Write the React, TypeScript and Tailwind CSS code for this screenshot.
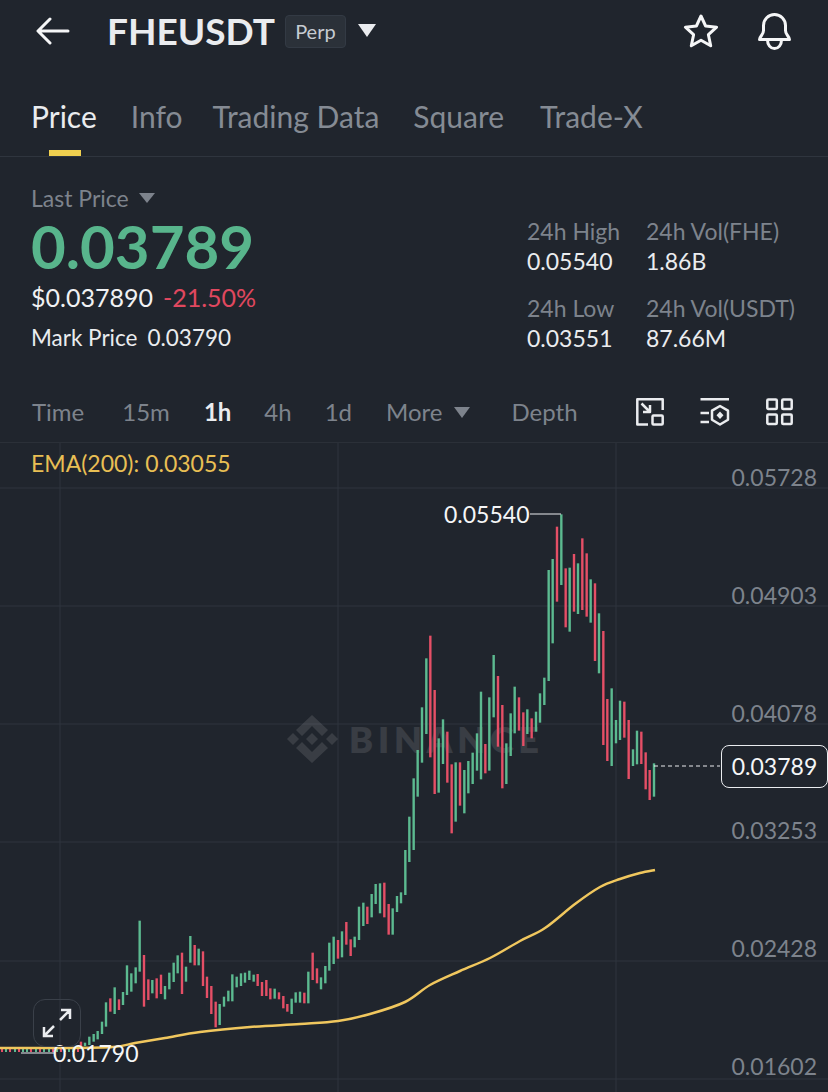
import React from "react";

const G = "#5cba90";
const R = "#e54f66";

// [x, top, bottom, up] measured on 3x crops
const left: [number, number, number, number][] = [
  [243,545,558,0],[255,548,558,1],[268,530,555,1],[281,522,545,1],[293,513,538,1],[306,485,522,1],[318,427,500,1],[331,415,455,0],
  [344,382,462,1],[357,418,450,0],[369,396,435,1],[381,316,405,1],[394,340,395,1],[407,322,370,1],[419,182,335,1],[432,285,440,0],
  [445,358,420,0],[457,360,400,1],[470,355,415,0],[483,344,402,0],[495,378,418,1],[508,338,388,1],[521,308,366,1],[533,286,340,1],
  [546,278,402,0],[558,320,365,1],[571,228,308,1],[584,255,316,0],[596,266,316,1],[609,274,378,0],[621,350,414,0],[634,378,462,0],
  [647,425,502,0],[659,432,495,1],[672,410,440,1],[685,392,424,1],[697,343,424,1],[710,350,382,1],[723,340,378,1],[735,338,368,1],
  [748,332,360,1],[761,344,365,1],[773,342,378,0],[786,366,408,0],[799,360,408,0],[811,385,418,0],[824,386,416,1],[837,397,418,0],
  [850,408,445,0],[862,432,455,0],[875,416,462,1],[887,397,428,1],[900,395,428,1],[913,398,430,0],[925,335,430,1],[938,278,360,0],
  [951,325,370,0],[963,352,388,1],[976,318,370,1],[988,248,332,1],[1001,230,312,1],[1014,240,296,0],[1026,214,292,1],[1039,186,254,0],
  [1052,238,288,0],[1064,230,262,1],[1077,140,240,1],[1090,128,198,1],[1102,140,192,0],[1115,102,172,1],[1127,72,132,1],[1140,70,160,1],
  [1153,68,172,0],[1166,132,224,0],[1178,145,224,1],[1191,108,156,1],[1203,97,130,1],[1216,-30,105,1],
];
const right: [number, number, number, number][] = [
  [28,950,1086,1],[41,835,1050,1],[53,750,890,1],[66,622,788,1],[79,475,702,1],[91,407,772,0],[104,570,882,0],[116,715,878,1],
  [129,658,792,1],[142,695,848,0],[155,793,1000,0],[167,787,965,1],[180,787,917,0],[193,810,940,1],[205,783,880,1],[218,758,852,1],
  [231,700,812,1],[243,575,838,1],[256,732,820,0],[268,592,812,1],[281,465,652,1],[294,528,740,0],[307,615,865,0],[319,730,852,1],
  [332,640,768,1],[344,560,700,1],[357,592,692,0],[370,637,738,0],[382,628,702,1],[395,655,715,0],[408,635,695,1],[420,580,668,1],
  [433,533,615,1],[446,210,543,1],[458,177,430,1],[471,80,305,0],[484,43,255,1],[497,205,382,0],[509,203,395,1],[522,162,335,0],
  [534,190,342,1],[547,115,330,0],[560,160,350,0],[572,238,368,1],[585,250,483,0],[597,340,520,1],[610,393,735,0],[622,597,783,0],
  [635,565,798,1],[648,660,730,1],[660,602,720,1],[673,605,713,0],[686,660,837,0],[699,748,798,1],[711,692,793,1],[724,695,792,0],
  [737,757,868,0],[749,810,900,0],[762,790,890,1],
];

const tiny: [number, number][] = [[1,0],[5,1],[9,0],[14,1],[18,0],[22,1],[26,1],[30,0],[35,1],[39,0],[43,1],[48,1],[52,0],[56,1],[60,0],[64,1],[68,1],[72,1],[77,0]];

const axis = ["0.05728", "0.04903", "0.04078", "0.03253", "0.02428", "0.01602"];

const ema: [number, number][] = [
  [0,1048],[60,1048],[113,1047],[135,1043],[165,1038],[200,1032],[250,1027],[300,1024],[338,1021],[370,1014],[405,1002],
  [430,985],[460,971],[490,958],[520,941],[545,928],[575,904],[600,887],[620,879],[640,873],[655,870],
];

function smooth(p: [number, number][]) {
  let d = `M${p[0][0]} ${p[0][1]}`;
  for (let i = 0; i < p.length - 1; i++) {
    const a = p[Math.max(i - 1, 0)];
    const b = p[i];
    const c = p[i + 1];
    const e = p[Math.min(i + 2, p.length - 1)];
    d += `C${b[0] + (c[0] - a[0]) / 6} ${b[1] + (c[1] - a[1]) / 6} ${c[0] - (e[0] - b[0]) / 6} ${c[1] - (e[1] - b[1]) / 6} ${c[0]} ${c[1]}`;
  }
  return d;
}

function Chart() {
  return (
    <svg viewBox="0 443 828 649" className="absolute inset-0 h-full w-full">
      {[488, 606, 724, 842, 961, 1079].map((y) => (
        <line key={y} x1="0" x2="828" y1={y} y2={y} stroke="#2f353e" strokeWidth="1" />
      ))}
      {[60, 338, 616].map((x) => (
        <line key={x} x1={x} x2={x} y1="443" y2="1092" stroke="#2f353e" strokeWidth="1" />
      ))}
      <g fill="#ffffff" opacity="0.11">
        <path d="M312 715l16 15-6 6-10-10-10 10-6-6z" />
        <path d="M312 763l-16-15 6-6 10 10 10-10 6 6z" />
        <path d="M312 733l6 6-6 6-6-6z" />
        <path d="M293 733l6 6-6 6-6-6z" />
        <path d="M332 733l6 6-6 6-6-6z" />
      </g>
      <text x="349" y="753" fontFamily="Lato, sans-serif" fontSize="36" fontWeight="800" fill="#ffffff" opacity="0.11" textLength="190" lengthAdjust="spacing">BINANCE</text>
      {tiny.map(([x, u]) => (
        <line key={x} x1={x + 1} x2={x + 1} y1="1048" y2="1052" stroke={u ? G : R} strokeWidth="2" />
      ))}
      {left.map(([x, t, b, u]) => (
        <line key={"l" + x} x1={x / 3} x2={x / 3} y1={t / 3 + 860} y2={b / 3 + 860} stroke={u ? G : R} strokeWidth="2.4" />
      ))}
      {right.map(([x, t, b, u]) => (
        <line key={"r" + x} x1={x / 3 + 400} x2={x / 3 + 400} y1={t / 3 + 500} y2={b / 3 + 500} stroke={u ? G : R} strokeWidth="2.4" />
      ))}
      <path d={smooth(ema)} fill="none" stroke="#f0c75e" strokeWidth="2.5" />
      <path d="M530 514H561" fill="none" stroke="#eaecef" strokeWidth="1" />
      <path d="M21 1053H54" fill="none" stroke="#eaecef" strokeWidth="1" />
      <path d="M654 766H720" fill="none" stroke="#eaecef" strokeWidth="1" strokeDasharray="4 3" />
      <text x="444" y="523" fontFamily="Lato, sans-serif" fontSize="23" fill="#f5f6f7">0.05540</text>
      <text x="53" y="1062" fontFamily="Lato, sans-serif" fontSize="23" fill="#f5f6f7">0.01790</text>
    </svg>
  );
}

function Stat({ label, value }: { label: string; value: string }) {
  return (
    <div className="flex flex-col">
      <span className="text-[23px] leading-[30px] text-[#7d838c]">{label}</span>
      <span className="text-[23px] leading-[30px] text-[#eaecef]">{value}</span>
    </div>
  );
}

export default function App() {
  return (
    <div className="flex h-[1092px] w-[828px] flex-col overflow-hidden bg-[#20252d] font-['Lato',sans-serif]">
      <header className="flex h-[62px] items-center pl-[36px] pr-[37px]">
        <svg width="34" height="30" viewBox="0 0 34 30" fill="none" stroke="#f5f6f7" strokeWidth="3" strokeLinecap="round" strokeLinejoin="round">
          <path d="M32 15H3M14 3L2 15L14 27" />
        </svg>
        <span className="ml-[37px] text-[37px] font-bold leading-[44px] text-[#eaecef]">FHEUSDT</span>
        <span className="ml-[10px] flex h-[33px] w-[61px] items-center justify-center rounded-[4px] border border-[#333a44] bg-[#2b3139] text-[20px] text-[#c6cbd2]">Perp</span>
        <svg width="18" height="13" viewBox="0 0 18 13" className="ml-[12px] -mt-[2px]">
          <path d="M0 0H18L9 13Z" fill="#eaecef" />
        </svg>
        <div className="ml-auto flex items-center gap-[39px]">
          <svg width="36" height="34" viewBox="0 0 36 34" fill="none" stroke="#f5f6f7" strokeWidth="3" strokeLinejoin="round">
            <path d="M18 2l4.600 10 11 1.200-8.200 7.500 2.300 11L18 26.300 8.300 31.700l2.300-11L2.400 13.200l11-1.200z" />
          </svg>
          <svg width="33" height="37" viewBox="0 0 33 37" fill="none" stroke="#f5f6f7" strokeWidth="3" strokeLinejoin="round">
            <path d="M1.500 26.500c0-1.500 1-2.700 2-4s2-3 2-5V12.500a11 11 0 0 1 22 0v5c0 2 1 3.700 2 5s2 2.500 2 4z" />
            <path d="M9.500 27c0 5 3 8.500 7 8.500s7-3.500 7-8.500" />
          </svg>
        </div>
      </header>

      <nav className="relative mt-[35px] flex h-[60px] border-b border-[#2f353e] pl-[31px] text-[30px] leading-[38px] text-[#858b94]">
        <span className="text-[#eaecef]">Price</span>
        <span className="ml-[34px]">Info</span>
        <span className="ml-[30px]">Trading Data</span>
        <span className="ml-[34px]">Square</span>
        <span className="ml-[36px]">Trade-X</span>
        <span className="absolute bottom-0 left-[49px] h-[6px] w-[32px] bg-[#f0d04f]" />
      </nav>

      <section className="flex h-[225px] pl-[31px] pt-[28px]">
        <div className="flex w-[496px] flex-col">
          <div className="flex items-center gap-[10px] text-[23px] leading-[26px] text-[#7d838c]">
            Last Price
            <svg width="16" height="10" viewBox="0 0 16 10"><path d="M0 0H16L8 10Z" fill="#7d838c" /></svg>
          </div>
          <div className="mt-[3px] text-[60px] font-bold leading-[64px] text-[#58b58c]">0.03789</div>
          <div className="mt-[4px] flex gap-[10px] text-[25px] leading-[30px]">
            <span className="text-[#f0f1f3]">$0.037890</span>
            <span className="text-[#e0485f]">-21.50%</span>
          </div>
          <div className="mt-[11px] flex gap-[10px] text-[22.500px] leading-[30px] text-[#eaecef]">
            <span>Mark Price</span>
            <span>0.03790</span>
          </div>
        </div>
        <div className="grid h-fit grid-cols-[119px_auto] gap-y-[17px] pt-[31px]">
          <Stat label="24h High" value="0.05540" />
          <Stat label="24h Vol(FHE)" value="1.86B" />
          <Stat label="24h Low" value="0.03551" />
          <Stat label="24h Vol(USDT)" value="87.66M" />
        </div>
      </section>

      <div className="flex h-[61px] items-center border-b border-[#2b3038] pl-[32px] pr-[35px] text-[24px] text-[#7d838c]">
        <span>Time</span>
        <span className="ml-[38px]">15m</span>
        <span className="ml-[34px] font-bold text-[#eaecef]">1h</span>
        <span className="ml-[33px]">4h</span>
        <span className="ml-[33px]">1d</span>
        <span className="ml-[34px]">More</span>
        <svg width="16" height="11" viewBox="0 0 16 11" className="ml-[12px]"><path d="M0 0H16L8 11Z" fill="#7d838c" /></svg>
        <span className="ml-[41px]">Depth</span>
        <div className="ml-auto flex items-center gap-[36px]">
          <svg width="28" height="28" viewBox="0 0 28 28" fill="none" stroke="#eaecef" strokeWidth="2.500" strokeLinejoin="round">
            <path d="M12 26.500H1.300V1.300H26.700V12" />
            <rect x="16.500" y="17.500" width="10.200" height="9" rx="1" />
            <path d="M5.500 5.500L13 13M14 7v7H7" />
          </svg>
          <svg width="30" height="28" viewBox="0 0 30 28" fill="none" stroke="#eaecef" strokeWidth="2.500" strokeLinejoin="round">
            <path d="M0.500 1.300H29M0.500 15h8.500M0.500 24h8.500" />
            <path d="M20 8l8 4.700v9L20 26.500l-8-4.800v-9z" />
            <path d="M20 13.500l3.500 3.700-3.500 3.700-3.500-3.700z" fill="#eaecef" stroke="none" />
          </svg>
          <svg width="27" height="28" viewBox="0 0 27 28" fill="none" stroke="#eaecef" strokeWidth="2.500" strokeLinejoin="round">
            <rect x="1.300" y="1.500" width="9.500" height="9.500" rx="1" />
            <rect x="16.200" y="1.500" width="9.500" height="9.500" rx="1" />
            <rect x="1.300" y="16.500" width="9.500" height="9.500" rx="1" />
            <rect x="16.200" y="16.500" width="9.500" height="9.500" rx="1" />
          </svg>
        </div>
      </div>

      <main className="relative flex-1 overflow-hidden">
        <Chart />
        <div className="absolute left-[31px] top-[6px] text-[23px] leading-[28px] text-[#e8bf54]">EMA(200): 0.03055</div>
        <div className="absolute right-[11px] top-[20px] flex h-[617px] flex-col justify-between text-right text-[23px] leading-[28px] text-[#7d838c]">
          {axis.map((a) => (
            <span key={a}>{a}</span>
          ))}
        </div>
        <div className="absolute left-[721px] top-[302px] flex h-[43px] w-[107px] items-center justify-center rounded-[8px] border border-[#eaecef] bg-[#20252d] text-[23px] text-[#f5f6f7]">0.03789</div>
        <div className="absolute left-[33px] top-[556px] flex h-[48px] w-[48px] items-center justify-center rounded-[12px] border border-[#3a4049]">
          <svg width="30" height="30" viewBox="0 0 30 30" fill="none" stroke="#eaecef" strokeWidth="2.500">
            <path d="M18 12L28 2M19 2h9v9M12 18L2 28M2 19v9h9" />
          </svg>
        </div>
      </main>
    </div>
  );
}
